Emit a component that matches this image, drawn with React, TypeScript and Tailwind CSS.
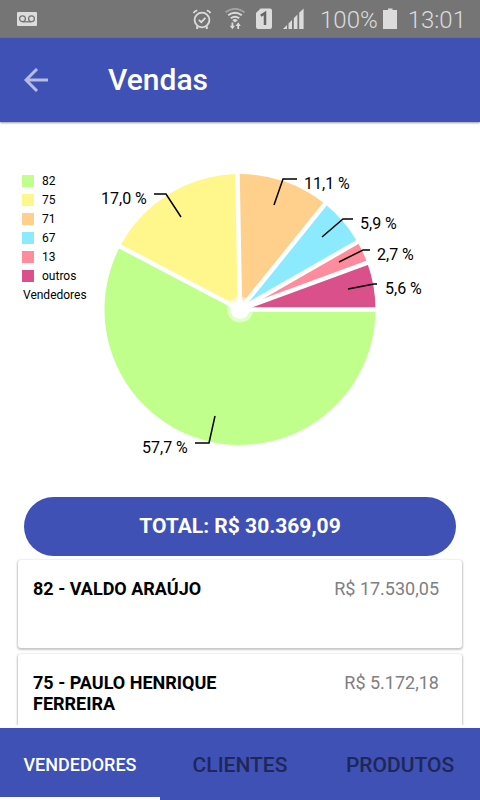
const SLICES = [
  { label: '82', share: 57.7, color: '#C0FF8C', line: '215,416 209,443 195,443', text: '57,7 %', x: 142, y: 453 },
  { label: '75', share: 17.0, color: '#FFF78C', line: '181,217 166,194 154,194', text: '17,0 %', x: 101, y: 204 },
  { label: '71', share: 11.1, color: '#FFD08C', line: '274,205 283,179 297,179', text: '11,1 %', x: 304, y: 189 },
  { label: '67', share: 5.9, color: '#8CEAFF', line: '322,237 343,219 353,219', text: '5,9 %', x: 360, y: 229 },
  { label: '13', share: 2.7, color: '#FF8C9D', line: '339,262 363,250 370,250', text: '2,7 %', x: 377, y: 260 },
  { label: 'outros', share: 5.6, color: '#D9508A', line: '348,289 374,284 377,284', text: '5,6 %', x: 385, y: 294 },
];

const SELLERS = [
  { name: '82 - VALDO ARAÚJO', total: 'R$ 17.530,05' },
  { name: '75 - PAULO HENRIQUE FERREIRA', total: 'R$ 5.172,18' },
];

const CX = 240;
const CY = 309.5;
const R = 135.5;

function point(percent: number) {
  const angle = (percent / 100) * Math.PI * 2;
  return { x: CX + R * Math.cos(angle), y: CY + R * Math.sin(angle) };
}

function PieChart() {
  const starts = SLICES.map((_, i) => SLICES.slice(0, i).reduce((sum, s) => sum + s.share, 0));
  return (
    <svg viewBox="96 160 340 300" className="min-w-0 flex-1" role="img" aria-label="Vendas por vendedor">
      {SLICES.map((s, i) => {
        const a = point(starts[i]);
        const b = point(starts[i] + s.share);
        return (
          <path
            key={s.label}
            d={`M${CX} ${CY} L${a.x} ${a.y} A${R} ${R} 0 ${s.share > 50 ? 1 : 0} 1 ${b.x} ${b.y} Z`}
            fill={s.color}
          />
        );
      })}
      <circle cx={CX} cy={CY} r="13" fill="#fff" fillOpacity="0.5" />
      {SLICES.map((s, i) => {
        const a = point(starts[i]);
        return (
          <line
            key={s.label}
            x1={CX}
            y1={CY}
            x2={CX + (a.x - CX) * 1.02}
            y2={CY + (a.y - CY) * 1.02}
            stroke="#fff"
            strokeWidth="4.5"
          />
        );
      })}
      <circle cx={CX} cy={CY} r="9.5" fill="#fff" />
      {SLICES.map((s) => (
        <g key={s.label}>
          <polyline points={s.line} fill="none" stroke="#000" strokeWidth="1.5" />
          <text x={s.x} y={s.y} className="text-[16px]">
            {s.text}
          </text>
        </g>
      ))}
    </svg>
  );
}

function StatusBar() {
  return (
    <div className="flex h-[38px] shrink-0 items-center bg-[#757575] pr-[14px] pl-[17px] text-[24px] leading-10 font-light text-[#dcdcdc]">
      <svg width="20" height="14" viewBox="0 0 20 14">
        <rect width="20" height="14" rx="1" fill="#dcdcdc" />
        <g fill="none" stroke="#757575" strokeWidth="1.3">
          <circle cx="5.5" cy="6.8" r="2.9" />
          <circle cx="14.5" cy="6.8" r="2.9" />
          <path d="M5.5 9.8H14.5" />
        </g>
      </svg>
      <div className="ml-auto flex items-center">
        <svg width="20" height="22" viewBox="0 0 20 22" fill="none" stroke="#dcdcdc">
          <circle cx="10" cy="12" r="7.4" strokeWidth="1.8" />
          <path d="M6.8 11.8L9.3 14.2L13.4 9.8" strokeWidth="1.7" />
          <path d="M1.5 5.2Q2.6 2.9 5.2 2.3M18.5 5.2Q17.4 2.9 14.8 2.3" strokeWidth="1.8" />
          <path d="M5.2 18.2V21M14.8 18.2V21" strokeWidth="2" />
        </svg>
        <svg width="20" height="22" viewBox="0 0 20 22" fill="none" stroke="#dcdcdc" className="ml-[13px]">
          <path d="M0.5 4.2Q10 -2.6 19.5 4.2" strokeWidth="1.8" strokeOpacity="0.45" />
          <path d="M3.2 7.3Q10 2 16.8 7.3" strokeWidth="1.9" />
          <path d="M5.8 10.3Q10 7 14.2 10.3" strokeWidth="1.9" />
          <path d="M7.3 12.3Q10 9.6 12.7 12.3L10 14.6Z" fill="#dcdcdc" stroke="none" />
          <path d="M7.4 14.5V19M13.2 21V17" strokeWidth="1.8" />
          <path d="M4.8 17.8H10L7.4 21.2ZM10.6 18H15.8L13.2 14.2Z" fill="#dcdcdc" stroke="none" />
        </svg>
        <svg width="16" height="22" viewBox="0 0 16 22" className="ml-[11px]">
          <path d="M4.6 0.5H14a2 2 0 0 1 2 2V19a2 2 0 0 1-2 2H2a2 2 0 0 1-2-2V5Z" fill="#dcdcdc" />
          <path d="M4.8 7.8L9 5V17" fill="none" stroke="#666" strokeWidth="2.5" />
        </svg>
        <svg width="21" height="22" viewBox="0 0 21 22" fill="#dcdcdc" className="ml-[11px]">
          <path d="M0 21L4 17V21ZM5.5 15.5L9 12V21H5.5ZM10.8 10.2L14.4 6.6V21H10.8ZM16.2 4.8L20.6 0.4V21H16.2Z" />
        </svg>
        <span className="ml-4 pt-px">100%</span>
        <svg width="14" height="22" viewBox="0 0 14 22" fill="#dcdcdc" className="ml-[5px]">
          <path d="M5 0.5H9.5V2H14V21H0V2H5Z" />
        </svg>
        <span className="ml-[11px] pt-px">13:01</span>
      </div>
    </div>
  );
}

export default function App() {
  return (
    <div className="flex h-screen flex-col overflow-hidden bg-white font-['Roboto',sans-serif] text-black">
      <StatusBar />
      <header className="z-10 flex h-[84px] shrink-0 items-center bg-[#3f51b5] px-6 shadow-[0_1px_2px_rgba(0,0,0,0.4)]">
        <button type="button" aria-label="Voltar" className="block">
          <svg width="24" height="24" viewBox="0 0 24 24" fill="none" stroke="#b6bce4" strokeWidth="3">
            <path d="M24 12H2.5M13 1L2 12L13 23" />
          </svg>
        </button>
        <h1 className="ml-[60px] text-[30px] leading-9 font-medium text-white">Vendas</h1>
      </header>

      <main className="flex min-h-0 flex-1 flex-col">
        <section className="flex shrink-0 items-start pt-[38px] pr-11 pb-[37px]">
          <div className="mt-3 w-24 shrink-0 pl-[22px] text-[12px] leading-[19px]">
            <ul>
              {SLICES.map((s) => (
                <li key={s.label} className="flex items-start gap-2">
                  <span className="mt-[3px] size-3" style={{ backgroundColor: s.color }} />
                  {s.label}
                </li>
              ))}
            </ul>
            <p className="pl-px">Vendedores</p>
          </div>
          <PieChart />
        </section>

        <button
          type="button"
          className="mx-6 h-[59px] shrink-0 rounded-full bg-[#3f51b5] pt-px text-[21px] font-bold text-white"
        >
          TOTAL: R$ 30.369,09
        </button>

        <ul className="mb-[3px] flex min-h-0 flex-1 flex-col gap-[6px] overflow-hidden px-[18px] pt-1">
          {SELLERS.map((s) => (
            <li
              key={s.name}
              className="flex h-[88px] shrink-0 items-start justify-between rounded-[3px] bg-white pt-[18px] pr-[23px] pl-[15px] text-[18px] leading-[21px] shadow-[0_1px_2px_1px_rgba(0,0,0,0.22)]"
            >
              <span className="w-[200px] font-bold">{s.name}</span>
              <span className="text-[#808080]">{s.total}</span>
            </li>
          ))}
        </ul>
      </main>

      <nav className="grid h-[72px] shrink-0 grid-cols-3 bg-[#3f51b5] font-medium text-[#1d2758]">
        <button type="button" className="border-b-[3px] border-white pt-[3px] text-[18px] text-white">
          VENDEDORES
        </button>
        <button type="button" className="pt-[3px] text-[21px]">CLIENTES</button>
        <button type="button" className="pt-[3px] text-[21px]">PRODUTOS</button>
      </nav>
    </div>
  );
}
